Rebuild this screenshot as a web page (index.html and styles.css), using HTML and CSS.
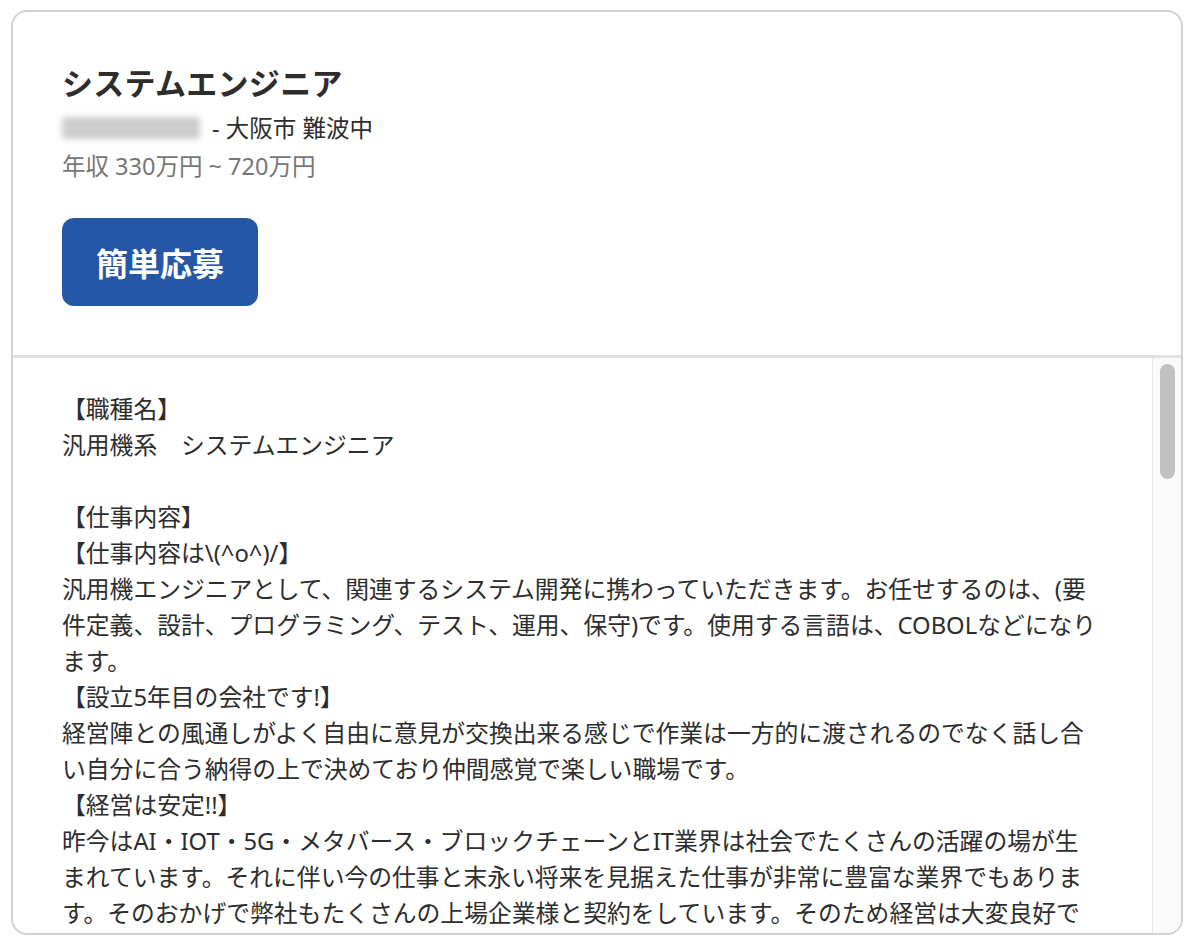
FILE: index.html
```html
<!DOCTYPE html>
<html lang="ja">
<head>
	<meta charset="UTF-8">
	<title>システムエンジニア</title>
	<link rel="stylesheet" href="styles.css">
</head>
<body>
	<div class="job-card">
		<div class="job-head">
			<h1 class="job-title">システムエンジニア</h1>
			<div class="job-company"><span class="company-blur"></span> - 大阪市 難波中</div>
			<div class="job-salary">年収 330万円 ~ 720万円</div>
			<a class="apply-btn" href="javascript:;">簡単応募</a>
		</div>
		<div class="job-body">
			<div class="job-desc">【職種名】
汎用機系　システムエンジニア

【仕事内容】
【仕事内容は\(^o^)/】
汎用機エンジニアとして、関連するシステム開発に携わっていただきます。お任せするのは、(要
件定義、設計、プログラミング、テスト、運用、保守)です。使用する言語は、COBOLなどになり
ます。
【設立5年目の会社です!】
経営陣との風通しがよく自由に意見が交換出来る感じで作業は一方的に渡されるのでなく話し合
い自分に合う納得の上で決めており仲間感覚で楽しい職場です。
【経営は安定!!】
昨今はAI・IOT・5G・メタバース・ブロックチェーンとIT業界は社会でたくさんの活躍の場が生
まれています。それに伴い今の仕事と末永い将来を見据えた仕事が非常に豊富な業界でもありま
す。そのおかげで弊社もたくさんの上場企業様と契約をしています。そのため経営は大変良好で
安定しています。</div>
			<div class="scroll-track"><div class="scroll-thumb"></div></div>
		</div>
	</div>
</body>
</html>
```
FILE: styles.css
```css
*{margin: 0; padding: 0; box-sizing: border-box;}
body{
	background: #fff;
	font-family: "Noto Sans", "Noto Sans CJK JP", sans-serif;
	color: #2d2d2d;
}

.job-card{
	margin: 10px 15px 0 11px;
	height: 925px;
	border: 2px solid #d4d2d0;
	border-radius: 16px;
	overflow: hidden;
	display: flex;
	flex-direction: column;
	background: #fff;
}

.job-head{
	padding: 51px 49px 49px;
	border-bottom: 3px solid #e4e2e0;
	flex: none;
}
.job-title{
	font-family: "Noto Sans CJK JP", sans-serif;
	font-size: 31px;
	font-weight: 700;
	line-height: 37px;
	letter-spacing: 0.3px;
}
.job-company{
	margin-top: 10px;
	font-size: 23.5px;
	line-height: 36px;
	display: flex;
	align-items: center;
	white-space: pre;
}
.company-blur{
	display: inline-block;
	width: 138px;
	height: 22px;
	margin: 0 6px 0 0;
	background: #cdcdcd;
	border-radius: 3px;
	filter: blur(3px);
}
.job-salary{
	margin-top: 2px;
	font-size: 23.5px;
	line-height: 36px;
	color: #767676;
}
.apply-btn{
	margin-top: 34px;
	display: inline-flex;
	align-items: center;
	justify-content: center;
	width: 196px;
	height: 88px;
	background: #2557a7;
	color: #fff;
	border-radius: 12px;
	font-family: "Noto Sans CJK JP", sans-serif;
	font-size: 32px;
	font-weight: 700;
	text-decoration: none;
}

.job-body{
	flex: 1;
	display: flex;
	overflow: hidden;
}
.job-desc{
	flex: 1;
	padding: 33px 20px 0 49px;
	font-size: 23.8px;
	line-height: 36px;
	white-space: pre-line;
	overflow: hidden;
}
.scroll-track{
	width: 29px;
	flex: none;
	background: #fafafa;
	border-left: 1px solid #e8e8e8;
	padding: 6px 6px 0 7px;
}
.scroll-thumb{
	height: 115px;
	background: #c1c1c1;
	border-radius: 8px;
}
```
